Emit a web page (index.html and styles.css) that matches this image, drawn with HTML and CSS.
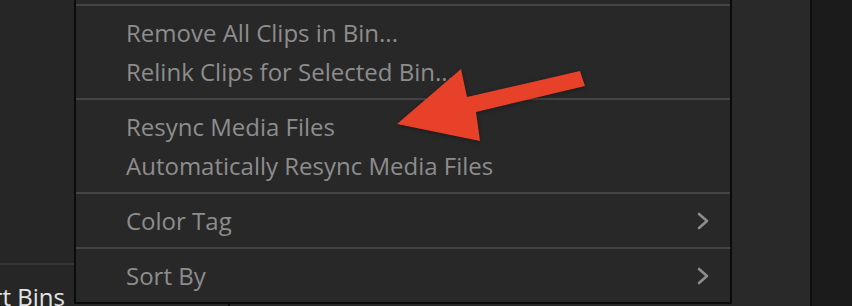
FILE: index.html
```html
<!DOCTYPE html>
<html lang="en">
<head>
    <meta charset="UTF-8">
    <title>Media Pool Context Menu</title>
    <link rel="stylesheet" href="styles.css">
</head>
<body>
    <div class="app">
        <aside class="bins">
            <div class="bins-list"></div>
            <div class="bins-footer">
                <span class="bins-label">Sort Bins</span>
            </div>
        </aside>

        <main class="center">
            <div class="context-menu">
                <div class="menu-clipped"></div>
                <div class="menu-group">
                    <div class="menu-item">Remove All Clips in Bin...</div>
                    <div class="menu-item">Relink Clips for Selected Bin...</div>
                </div>
                <div class="menu-group">
                    <div class="menu-item">Resync Media Files</div>
                    <div class="menu-item">Automatically Resync Media Files</div>
                </div>
                <div class="menu-group">
                    <div class="menu-item has-sub">
                        Color Tag
                        <svg class="chevron" viewBox="0 0 12 18"><path d="M2 2 L10 9 L2 16"/></svg>
                    </div>
                </div>
                <div class="menu-group">
                    <div class="menu-item has-sub">
                        Sort By
                        <svg class="chevron" viewBox="0 0 12 18"><path d="M2 2 L10 9 L2 16"/></svg>
                    </div>
                </div>
            </div>
            <div class="center-footer">
                <div class="footer-cell first"></div>
                <div class="footer-cell"></div>
            </div>
        </main>

        <div class="strip"></div>
        <div class="side-panel"></div>
    </div>

    <!-- annotation arrow drawn over the screenshot -->
    <svg class="annotation" viewBox="0 0 852 306" width="852" height="306">
        <polygon points="580,71 585,86 476,112 480,141 397,124 461,69 467,97" fill="#e8412a"/>
    </svg>
</body>
</html>
```

FILE: styles.css
```css
* {
    margin: 0;
    padding: 0;
    box-sizing: border-box;
}

body {
    width: 852px;
    height: 306px;
    overflow: hidden;
    background-color: #1b1b1b;
    font-family: 'Open Sans', 'Liberation Sans', sans-serif;
    position: relative;
}

.app {
    display: flex;
    height: 306px;
}

/* left bins panel */
.bins {
    width: 74px;
    display: flex;
    flex-direction: column;
    background-color: #262626;
    overflow: hidden;
}

.bins-list {
    flex-shrink: 0;
    height: 265px;
    border-bottom: 2px solid #363636;
}

.bins-footer {
    flex-shrink: 0;
    padding-top: 16px;
    white-space: nowrap;
}

.bins-label {
    display: block;
    margin-left: -35px;
    font-size: 24px;
    line-height: 32px;
    color: #e4e4e4;
}

/* center area with the context menu */
.center {
    width: 658px;
    display: flex;
    flex-direction: column;
    background-color: #262626;
}

.context-menu {
    flex-shrink: 0;
    height: 304px;
    background-color: #282828;
    border-left: 2px solid #0b0b0b;
    border-right: 2px solid #0b0b0b;
    border-bottom: 2px solid #0b0b0b;
    overflow: hidden;
}

.menu-clipped {
    height: 4px;
}

.menu-group {
    padding: 7px 0;
    border-top: 2px solid #444444;
}

.menu-item {
    display: flex;
    align-items: center;
    justify-content: space-between;
    height: 39px;
    padding: 0 21px 0 50px;
    font-size: 24px;
    line-height: 39px;
    color: #8d8d8d;
    white-space: nowrap;
}

.chevron {
    width: 12px;
    height: 18px;
}

.chevron path {
    fill: none;
    stroke: #8d8d8d;
    stroke-width: 2.6;
    stroke-linecap: round;
    stroke-linejoin: round;
}

.center-footer {
    flex: 1;
    display: flex;
}

.footer-cell {
    flex: 1;
    background-color: #282828;
}

.footer-cell.first {
    flex: none;
    width: 156px;
    border-right: 2px solid #0b0b0b;
}

/* right side */
.strip {
    width: 80px;
    background-color: #292929;
    border-right: 2px solid #0d0d0d;
}

.side-panel {
    flex: 1;
    background-color: #1b1b1b;
}

.annotation {
    position: absolute;
    top: 0;
    left: 0;
    pointer-events: none;
    filter: drop-shadow(0 1px 2px rgba(0, 0, 0, 0.35));
}
```
